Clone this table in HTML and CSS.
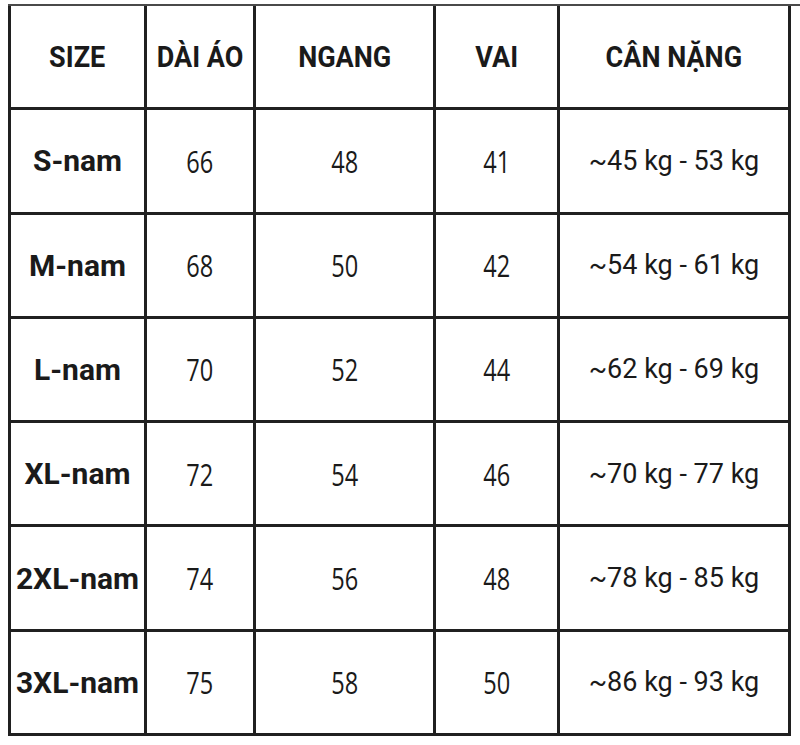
FILE: index.html
```html
<!DOCTYPE html>
<html lang="vi">
<head>
<meta charset="utf-8">
<title>Bảng size</title>
<link rel="stylesheet" href="styles.css">
</head>
<body>
<div class="sheet">
  <div class="grid">
    <div class="cell"><span class="h">SIZE</span></div>
    <div class="cell"><span class="h">DÀI ÁO</span></div>
    <div class="cell"><span class="h">NGANG</span></div>
    <div class="cell"><span class="h">VAI</span></div>
    <div class="cell"><span class="h">CÂN NẶNG</span></div>

    <div class="cell"><span class="s">S-nam</span></div>
    <div class="cell"><span class="n">66</span></div>
    <div class="cell"><span class="n">48</span></div>
    <div class="cell"><span class="n">41</span></div>
    <div class="cell"><span class="w">~45 kg - 53 kg</span></div>

    <div class="cell"><span class="s">M-nam</span></div>
    <div class="cell"><span class="n">68</span></div>
    <div class="cell"><span class="n">50</span></div>
    <div class="cell"><span class="n">42</span></div>
    <div class="cell"><span class="w">~54 kg - 61 kg</span></div>

    <div class="cell"><span class="s">L-nam</span></div>
    <div class="cell"><span class="n">70</span></div>
    <div class="cell"><span class="n">52</span></div>
    <div class="cell"><span class="n">44</span></div>
    <div class="cell"><span class="w">~62 kg - 69 kg</span></div>

    <div class="cell"><span class="s">XL-nam</span></div>
    <div class="cell"><span class="n">72</span></div>
    <div class="cell"><span class="n">54</span></div>
    <div class="cell"><span class="n">46</span></div>
    <div class="cell"><span class="w">~70 kg - 77 kg</span></div>

    <div class="cell"><span class="s">2XL-nam</span></div>
    <div class="cell"><span class="n">74</span></div>
    <div class="cell"><span class="n">56</span></div>
    <div class="cell"><span class="n">48</span></div>
    <div class="cell"><span class="w">~78 kg - 85 kg</span></div>

    <div class="cell"><span class="s">3XL-nam</span></div>
    <div class="cell"><span class="n">75</span></div>
    <div class="cell"><span class="n">58</span></div>
    <div class="cell"><span class="n">50</span></div>
    <div class="cell"><span class="w">~86 kg - 93 kg</span></div>
  </div>
</div>
</body>
</html>
```

FILE: styles.css
```css
html, body {
  margin: 0;
  padding: 0;
  background: #ffffff;
}

body {
  width: 800px;
  height: 745px;
  overflow: hidden;
  font-family: Roboto, "Liberation Sans", sans-serif;
  color: #1b1b1b;
}

.sheet {
  margin-top: 4px;
  margin-left: 8px;
  border-top: 2px solid #4a4a4a;
}

.grid {
  width: 783px;
  height: 730px;
  box-sizing: border-box;
  display: grid;
  grid-template-columns: 133px 106px 177px 121px 228px;
  grid-template-rows: repeat(7, 1fr);
  gap: 3px;
  padding: 0 3px 3px 3px;
  background: #202020;
}

.cell {
  background: #ffffff;
  display: flex;
  align-items: center;
  justify-content: center;
  white-space: nowrap;
  overflow: hidden;
}

.h {
  display: inline-block;
  font-family: Roboto, "Liberation Sans", sans-serif;
  font-weight: 700;
  font-size: 30px;
  transform: scaleX(0.9);
  color: #1a1a1a;
}

.s {
  font-family: Roboto, "Liberation Sans", sans-serif;
  font-weight: 700;
  font-size: 30px;
  color: #1a1a1a;
}

.n {
  display: inline-block;
  font-family: "Open Sans", "Noto Sans", sans-serif;
  font-weight: 500;
  font-size: 31px;
  transform: scaleX(0.76);
  color: #1a1a1a;
}

.w {
  font-family: Roboto, "Liberation Sans", sans-serif;
  font-weight: 400;
  font-size: 27px;
  color: #1a1a1a;
}
```
